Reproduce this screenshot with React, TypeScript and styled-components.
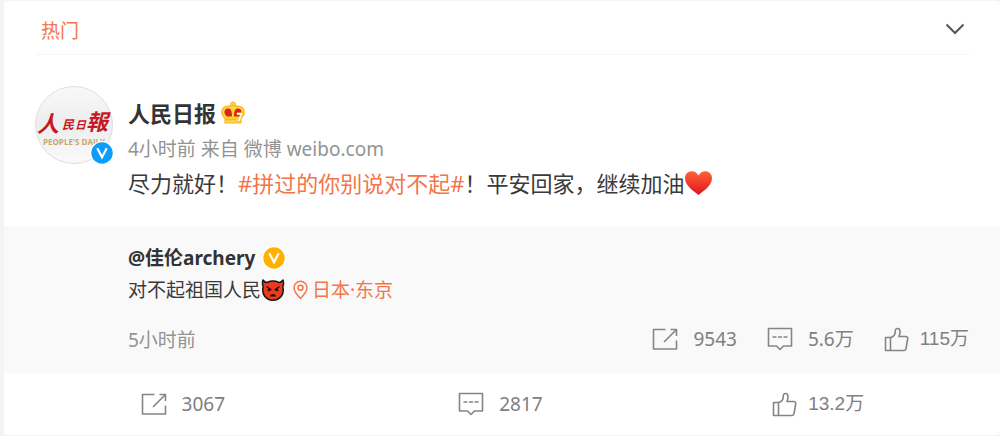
import React from 'react';
import styled, { createGlobalStyle } from 'styled-components';

const GlobalStyle = createGlobalStyle`
  * { box-sizing: border-box; }
  body {
    margin: 0;
    background: #f4f4f4;
    color: #3a3a3a;
    font-family: "Noto Sans", "Noto Sans CJK SC", sans-serif;
  }
  button {
    padding: 0;
    border: 0;
    background: none;
    font: inherit;
    color: inherit;
    cursor: pointer;
  }
  a { color: #f2764a; text-decoration: none; }
  svg { display: block; flex: none; }
`;

const Card = styled.article`
  margin: 1px 0 1px 4px;
  background: #fff;
  border-radius: 4px;
  overflow: hidden;
`;

const Header = styled.header`
  display: flex;
  align-items: center;
  justify-content: space-between;
  height: 54px;
  margin: 0 31px;
  padding: 4px 4px 0 6px;
  border-bottom: 1px solid #f5f5f5;
  color: #f2764a;
  font-size: 19px;
`;

const Post = styled.section`
  display: flex;
  gap: 15px;
  padding: 31px 31px 27px;
`;

const Avatar = styled.div`
  position: relative;
  flex: none;
  width: 78px;
  height: 78px;
`;

const VerifiedBadge = styled.span`
  position: absolute;
  right: -1px;
  bottom: -1px;
`;

const Body = styled.div`
  flex: 1;
  padding-top: 9px;
`;

const Name = styled.h2<{ $small?: boolean }>`
  display: flex;
  align-items: center;
  gap: ${(p) => (p.$small ? 7 : 5)}px;
  margin: 0;
  color: #333;
  font-size: ${(p) => (p.$small ? 19 : 22)}px;
  font-weight: 700;
  line-height: ${(p) => (p.$small ? 32 : 36)}px;
`;

const Meta = styled.div`
  color: #939393;
  font-size: 19px;
  line-height: 36px;
`;

const Content = styled.div<{ $small?: boolean }>`
  display: flex;
  align-items: center;
  font-size: ${(p) => (p.$small ? 19 : 22)}px;
  line-height: 32px;
`;

const Location = styled.a`
  display: flex;
  align-items: center;
  gap: 3px;
  margin-left: 7px;
`;

const Repost = styled.section`
  padding: 16px 31px 18px 124px;
  background: #f9f9f9;
`;

const RepostFooter = styled.footer`
  display: flex;
  justify-content: space-between;
  align-items: center;
  margin-top: 17px;
  height: 32px;
  color: #939393;
  font-size: 19px;
`;

const Actions = styled.div`
  display: flex;
  gap: 30px;
`;

const Action = styled.button<{ $like?: boolean }>`
  display: flex;
  align-items: center;
  justify-content: center;
  gap: ${(p) => (p.$like ? 11 : 15)}px;
  height: 32px;
  color: #808080;
  font-family: ${(p) => (p.$like ? '"Liberation Sans"' : '"Noto Sans"')}, "Noto Sans CJK SC", sans-serif;
  font-size: 19px;
  line-height: ${(p) => (p.$like ? 24 : 32)}px;
`;

const ActionBar = styled.footer`
  display: grid;
  grid-template-columns: repeat(3, 1fr);
  align-items: center;
  height: 62px;
  padding: 0 23px 0 20px;
`;

const Chevron = () => (
  <svg width="20" height="14" viewBox="0 0 20 14" fill="none" stroke="#555" strokeWidth="2">
    <path d="M1.5 1.500 10 10l8.500-8.500" />
  </svg>
);

const ShareIcon = () => (
  <svg width="26" height="24" viewBox="0 0 26 24" fill="none" stroke="#858585" strokeWidth="1.600">
    <path d="M13.500 2.500H1.500v19.500h23v-8.500M12 15 24 3M18.500 2.500h6V9" strokeLinejoin="round" />
  </svg>
);

const CommentIcon = () => (
  <svg width="26" height="24" viewBox="0 0 26 24" fill="none" stroke="#858585" strokeWidth="1.600">
    <path d="M1.500 1.500h23v17.500h-8l-3.500 3.500L9.500 19h-8z" strokeLinejoin="round" />
    <path d="M5.500 10h4M11 10h4M16.500 10h4" />
  </svg>
);

const LikeIcon = () => (
  <svg width="25" height="25" viewBox="0 0 25 25" fill="none" stroke="#858585" strokeWidth="1.600" strokeLinejoin="round">
    <path d="M1.500 10.500h5v13h-5zM6.500 10.500c3-.5 4.800-3 4.800-6.500 0-3.500 4.700-3.500 4.700.5 0 2-.4 3.500-1 5h6.500c1.800 0 2.500 1 2.200 2.500l-1.700 9.500c-.2 1.300-1 2-2.200 2H6.500" />
  </svg>
);

const CrownIcon = () => (
  <svg width="24" height="24" viewBox="0 0 24 24">
    <circle cx="12" cy="3.500" r="2.500" fill="#ffd53d" stroke="#f9b52c" />
    <path d="M4 22v-4.500C-.5 13.500-.5 6 6 5.300c2 0 4-1 6-1s4 1 6 1c6.500.7 6.500 8.200 2 12.200V22z" fill="#ffd53d" stroke="#f9b52c" strokeWidth="1.200" strokeLinejoin="round" />
    <path d="M11 15.500H6C2 12.500 3 7.500 7 7.500c3 0 4 2.500 4 8zM13 15.500h5c4-3 3-8-1-8-3 0-4 2.500-4 8z" fill="#dc2414" />
    <path d="M5 18.700h10" stroke="#f9b52c" strokeWidth="1.200" />
    <text x="16" y="20" fontFamily="Open Sans, sans-serif" fontSize="10" fontWeight="700" fill="#fff" stroke="#f9b52c" strokeWidth="1" paintOrder="stroke">7</text>
  </svg>
);

const VIcon = ({ color }: { color: string }) => (
  <svg width="24" height="24" viewBox="0 0 24 24">
    <circle cx="12" cy="12" r="12" fill="#fff" />
    <circle cx="12" cy="12" r="10.700" fill={color} />
    <path d="M7.300 7.200 12 16.200l4.700-9" fill="none" stroke="#fff" strokeWidth="2.200" />
  </svg>
);

const HeartIcon = () => (
  <svg width="29" height="26" viewBox="0 0 29 26">
    <defs>
      <linearGradient id="heart" x1="0" y1="0" x2="0" y2="1">
        <stop offset="0" stopColor="#ff6338" />
        <stop offset="1" stopColor="#df1420" />
      </linearGradient>
    </defs>
    <path d="M14.500 25C9 20.500 1 15.500 1 8.200 1 .5 11-1.500 14.500 5.500 18-1.500 28 .5 28 8.200 28 15.500 20 20.500 14.500 25z" fill="url(#heart)" />
  </svg>
);

const DevilIcon = () => (
  <svg width="24" height="24" viewBox="0 0 24 24">
    <path d="M2 2c1.500 2 3 2.700 4.500 2.300 3.500-1.600 7.500-1.600 11 0C19 4.700 20.500 4 22 2c.8 2.500.6 5-.2 7 2 7-2.800 13.200-9.800 13.200S.2 16 2.200 9C1.400 7 1.200 4.500 2 2z" fill="#ed3a1d" stroke="#161616" strokeWidth="1.500" strokeLinejoin="round" />
    <path d="M5.500 8.500l5 3.500M18.500 8.500l-5 3.500" stroke="#161616" strokeWidth="1.400" />
    <circle cx="8" cy="12" r="1.400" fill="#161616" />
    <circle cx="16" cy="12" r="1.400" fill="#161616" />
    <path d="M9 18.500c.5-3.200 5.500-3.200 6 0z" fill="#161616" />
  </svg>
);

const PinIcon = () => (
  <svg width="17" height="20" viewBox="0 0 17 20" fill="none" stroke="#f2764a" strokeWidth="1.500">
    <path d="M8.500 18.500C5 15 2 11.500 2 7.800a6.500 6.500 0 0 1 13 0c0 3.700-3 7.200-6.500 10.700z" />
    <circle cx="8.500" cy="7.800" r="2.500" />
  </svg>
);

const Logo = () => (
  <svg width="78" height="78" viewBox="0 0 78 78" role="img" aria-label="人民日报">
    <defs>
      <linearGradient id="disc" x1="0" y1="0" x2="0" y2="1">
        <stop offset="0" stopColor="#f9f9f9" />
        <stop offset="0.500" stopColor="#ededee" />
        <stop offset="1" stopColor="#fafafa" />
      </linearGradient>
    </defs>
    <circle cx="39" cy="39" r="38.500" fill="url(#disc)" stroke="#dedede" />
    <g fill="#c51925" fontFamily="Noto Sans CJK SC, sans-serif" fontWeight="700" fontStyle="italic">
      <text x="2" y="46" fontSize="22">人</text>
      <text x="27" y="43" fontSize="12">民</text>
      <text x="40" y="43" fontSize="11">日</text>
      <text x="51" y="44" fontSize="22">報</text>
    </g>
    <text x="8" y="59" fontSize="8" fontWeight="700" fill="#c9a569" fontFamily="Open Sans, sans-serif">PEOPLE'S DAILY</text>
  </svg>
);

export default function App() {
  return (
    <>
      <GlobalStyle />
      <Card>
        <Header>
          <span>热门</span>
          <button aria-label="更多"><Chevron /></button>
        </Header>
        <Post>
          <Avatar>
            <Logo />
            <VerifiedBadge><VIcon color="#0a9dfb" /></VerifiedBadge>
          </Avatar>
          <Body>
            <Name>人民日报 <CrownIcon /></Name>
            <Meta>4小时前 来自 微博 weibo.com</Meta>
            <Content>
              <span>尽力就好！<a href="#topic">#拼过的你别说对不起#</a>！平安回家，继续加油</span>
              <HeartIcon />
            </Content>
          </Body>
        </Post>
        <Repost>
          <Name $small>@佳伦archery <VIcon color="#ffb100" /></Name>
          <Content $small>
            <span>对不起祖国人民</span>
            <DevilIcon />
            <Location href="#tokyo"><PinIcon />日本·东京</Location>
          </Content>
          <RepostFooter>
            <span>5小时前</span>
            <Actions>
              <Action><ShareIcon />9543</Action>
              <Action><CommentIcon />5.6万</Action>
              <Action $like><LikeIcon />115万</Action>
            </Actions>
          </RepostFooter>
        </Repost>
        <ActionBar>
          <Action><ShareIcon />3067</Action>
          <Action><CommentIcon />2817</Action>
          <Action $like><LikeIcon />13.2万</Action>
        </ActionBar>
      </Card>
    </>
  );
}
